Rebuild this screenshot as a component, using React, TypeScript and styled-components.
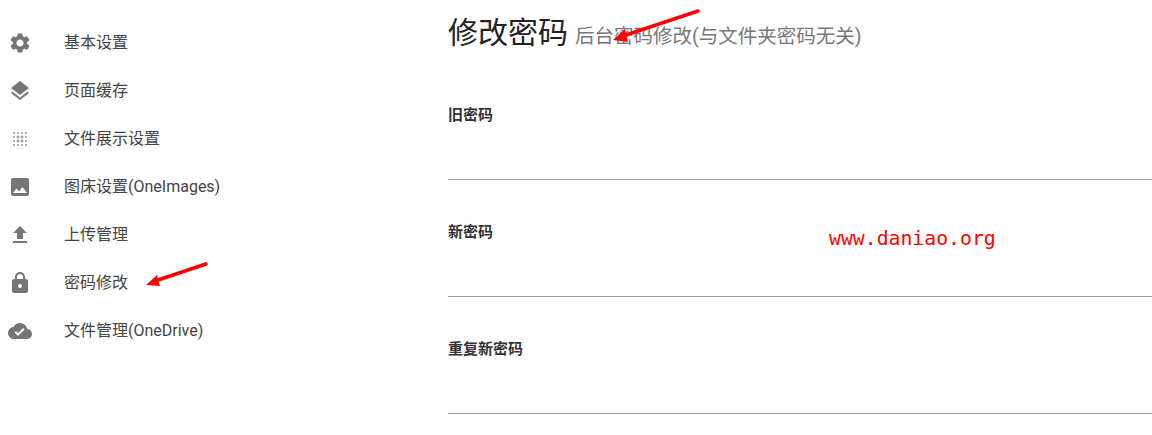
import React from 'react';
import styled, { createGlobalStyle } from 'styled-components';
import { MdSettings, MdLayers, MdBlurOn, MdImage, MdFileUpload, MdLock, MdCloudDone } from 'react-icons/md';

const GlobalStyle = createGlobalStyle`
    html, body {
        margin: 0;
        padding: 0;
        background: #fff;
        overflow: hidden;
    }
    body {
        font-family: Roboto, "Noto Sans CJK SC", sans-serif;
    }
`;

const Page = styled.div`
    position: relative;
    width: 1152px;
    height: 435px;
    overflow: hidden;
    display: flex;
`;

const Sidebar = styled.nav`
    width: 448px;
    flex-shrink: 0;
    padding-top: 19px;
    box-sizing: border-box;
`;

const NavItem = styled.div`
    display: flex;
    align-items: center;
    height: 48px;
    padding-left: 8px;
`;

const NavIcon = styled.span<{ $faded?: boolean }>`
    display: flex;
    width: 24px;
    height: 24px;
    margin-right: 32px;
    color: ${(p) => (p.$faded ? '#a0a0a0' : '#757575')};
    font-size: 24px;
`;

const NavText = styled.span`
    padding-bottom: 5px;
    font-size: 16px;
    color: #444;
`;

const Main = styled.main`
    flex: 1;
    padding-top: 11px;
`;

const Heading = styled.h1`
    margin: 0 0 4px;
    font-size: 30px;
    line-height: 44px;
    font-weight: 400;
    color: #222;
`;

const SubHeading = styled.small`
    margin-left: 7px;
    font-size: 19.5px;
    color: #777;
`;

const FieldGroup = styled.div`
    display: flex;
    flex-direction: column;
`;

const Field = styled.div`
    height: 117px;
    box-sizing: border-box;
    border-bottom: 1px solid #9e9e9e;
`;

const FieldLabel = styled.label`
    display: block;
    padding-top: 42px;
    font-size: 15px;
    line-height: 20px;
    font-weight: 700;
    color: #333;
`;

const Watermark = styled.div`
    position: absolute;
    left: 829px;
    top: 227px;
    font-family: "DejaVu Sans Mono", "Liberation Mono", monospace;
    font-size: 19.8px;
    line-height: 24px;
    color: #ff0000;
`;

const Arrow = styled.svg`
    position: absolute;
    overflow: visible;
    left: 0;
    top: 0;
    width: 1152px;
    height: 435px;
    pointer-events: none;
`;

const navItems = [
    { icon: <MdSettings />, label: '基本设置' },
    { icon: <MdLayers />, label: '页面缓存' },
    { icon: <MdBlurOn />, label: '文件展示设置', faded: true },
    { icon: <MdImage />, label: '图床设置(OneImages)' },
    { icon: <MdFileUpload />, label: '上传管理' },
    { icon: <MdLock />, label: '密码修改' },
    { icon: <MdCloudDone />, label: '文件管理(OneDrive)' },
];

const fields = ['旧密码', '新密码', '重复新密码'];

const App = () => {
    return (
        <Page>
            <GlobalStyle />
            <Sidebar>
                {navItems.map((item) => (
                    <NavItem key={item.label}>
                        <NavIcon $faded={item.faded}>{item.icon}</NavIcon>
                        <NavText>{item.label}</NavText>
                    </NavItem>
                ))}
            </Sidebar>
            <Main>
                <Heading>
                    修改密码<SubHeading>后台密码修改(与文件夹密码无关)</SubHeading>
                </Heading>
                <FieldGroup>
                    {fields.map((label) => (
                        <Field key={label}>
                            <FieldLabel>{label}</FieldLabel>
                        </Field>
                    ))}
                </FieldGroup>
            </Main>
            <Watermark>www.daniao.org</Watermark>
            <Arrow viewBox="0 0 1152 435">
                <path d="M698 11 L626 35" stroke="#f00" strokeWidth="3.5" strokeLinecap="round" />
                <path d="M613 40 L625 29 L626 35 L628 42 Z" fill="#f00" />
                <path d="M206 264 L158 280" stroke="#f00" strokeWidth="3.5" strokeLinecap="round" />
                <path d="M146 285 L157 275 L158 280 L160 286 Z" fill="#f00" />
            </Arrow>
        </Page>
    );
};

export default App;
